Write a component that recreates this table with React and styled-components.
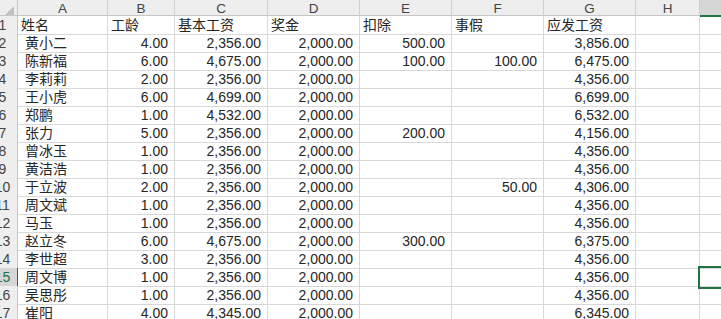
import styled, { createGlobalStyle } from "styled-components";

const GlobalStyle = createGlobalStyle`
  html, body {
    margin: 0;
    padding: 0;
    background: #ffffff;
    overflow: hidden;
  }
  body {
    font-family: "Liberation Sans", "Noto Sans CJK SC", sans-serif;
  }
`;

const COLS = "30px 90px 67px 93px 92px 92px 92px 92px 64px 80px";
const LETTERS = ["A", "B", "C", "D", "E", "F", "G", "H", "I"];
const SELECTED_COL = 8;
const SELECTED_ROW = 15;

const rows = [
  ["姓名", "工龄", "基本工资", "奖金", "扣除", "事假", "应发工资"],
  [" 黄小二", "4.00", "2,356.00", "2,000.00", "500.00", "", "3,856.00"],
  [" 陈新福", "6.00", "4,675.00", "2,000.00", "100.00", "100.00", "6,475.00"],
  [" 李莉莉", "2.00", "2,356.00", "2,000.00", "", "", "4,356.00"],
  [" 王小虎", "6.00", "4,699.00", "2,000.00", "", "", "6,699.00"],
  [" 郑鹏", "1.00", "4,532.00", "2,000.00", "", "", "6,532.00"],
  [" 张力", "5.00", "2,356.00", "2,000.00", "200.00", "", "4,156.00"],
  [" 曾冰玉", "1.00", "2,356.00", "2,000.00", "", "", "4,356.00"],
  [" 黄洁浩", "1.00", "2,356.00", "2,000.00", "", "", "4,356.00"],
  [" 于立波", "2.00", "2,356.00", "2,000.00", "", "50.00", "4,306.00"],
  [" 周文斌", "1.00", "2,356.00", "2,000.00", "", "", "4,356.00"],
  [" 马玉", "1.00", "2,356.00", "2,000.00", "", "", "4,356.00"],
  [" 赵立冬", "6.00", "4,675.00", "2,000.00", "300.00", "", "6,375.00"],
  [" 李世超", "3.00", "2,356.00", "2,000.00", "", "", "4,356.00"],
  [" 周文博", "1.00", "2,356.00", "2,000.00", "", "", "4,356.00"],
  [" 吴思彤", "1.00", "2,356.00", "2,000.00", "", "", "4,356.00"],
  [" 崔阳", "4.00", "4,345.00", "2,000.00", "", "", "6,345.00"],
];

function App() {
  return (
    <>
      <GlobalStyle />
      <Sheet>
        <HeaderRow>
          <Corner>
            <SelectAll />
          </Corner>
          {LETTERS.map((l, i) => (
            <ColHead key={l} $active={i === SELECTED_COL}>
              {l}
            </ColHead>
          ))}
        </HeaderRow>
        {rows.map((row, r) => {
          const n = r + 1;
          return (
            <Row key={n}>
              <RowHead $active={n === SELECTED_ROW}>{n}</RowHead>
              {row.map((val, c) => (
                <Cell key={c} $num={r > 0 && c > 0}>
                  {val}
                </Cell>
              ))}
              <Cell />
              <Cell $selected={n === SELECTED_ROW} />
            </Row>
          );
        })}
      </Sheet>
    </>
  );
}

const Sheet = styled.div`
  margin-left: -12px;
  width: 800px;
  color: #222;
  font-size: 14px;
`;

const HeaderRow = styled.div`
  display: grid;
  grid-template-columns: ${COLS};
  height: 16px;
  background: #eeeeee;
  border-bottom: 1px solid #c6c6c6;
  box-sizing: border-box;
`;

const Corner = styled.div`
  position: relative;
  border-right: 1px solid #c6c6c6;
`;

const SelectAll = styled.div`
  position: absolute;
  right: 3px;
  bottom: 2px;
  width: 0;
  height: 0;
  border-left: 9px solid transparent;
  border-bottom: 9px solid #c2c2c2;
`;

const ColHead = styled.div`
  text-align: center;
  font-size: 13.5px;
  line-height: 17px;
  color: ${(p) => (p.$active ? "#217346" : "#444")};
  background: ${(p) => (p.$active ? "#d6d6d6" : "transparent")};
  border-right: 1px solid #d0d0d0;
  box-shadow: ${(p) => (p.$active ? "inset 0 -2px 0 #217346" : "none")};
`;

const Row = styled.div`
  display: grid;
  grid-template-columns: ${COLS};
  height: 18px;
`;

const RowHead = styled.div`
  text-align: center;
  font-size: 14px;
  line-height: 18px;
  color: ${(p) => (p.$active ? "#217346" : "#444")};
  background: ${(p) => (p.$active ? "#d6d6d6" : "#eeeeee")};
  border-right: 1px solid ${(p) => (p.$active ? "#217346" : "#c6c6c6")};
  border-bottom: 1px solid #d0d0d0;
  box-sizing: border-box;
`;

const Cell = styled.div`
  position: relative;
  box-sizing: border-box;
  border-right: 1px solid #d8d8d8;
  border-bottom: 1px solid #d8d8d8;
  padding: 0 ${(p) => (p.$num ? "6px" : "3px")};
  text-align: ${(p) => (p.$num ? "right" : "left")};
  white-space: pre;
  overflow: hidden;
  line-height: 19px;
  font-size: 14px;
  color: #262626;
  ${(p) =>
    p.$selected &&
    `
    outline: 2px solid #217346;
    outline-offset: 0px;
    z-index: 1;
  `}
`;

export default App;
